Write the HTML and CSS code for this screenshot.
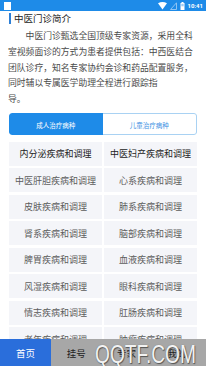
FILE: index.html
```html
<!DOCTYPE html>
<html lang="zh">
<head>
<meta charset="utf-8">
<title>中医门诊简介</title>
<link rel="stylesheet" href="styles.css">
</head>
<body>
<div class="phone">
  <div class="statusbar">
    <span class="notif"></span>
    <span class="sb-right">
      <svg class="ic-wifi" width="9" height="8" viewBox="0 0 9 8"><path d="M0 1.2 Q4.5 -1.2 9 1.2 L4.5 7.5 Z" fill="#fff"/></svg>
      <svg class="ic-sig" width="7" height="8" viewBox="0 0 7 8"><path d="M0.5 7.5 L6.5 7.5 L6.5 0.8 Z" fill="none" stroke="#8fc3f2" stroke-width="1"/></svg>
      <svg class="ic-bat" width="5" height="8" viewBox="0 0 5 8"><rect x="1.5" y="0" width="2" height="1" fill="#fff"/><rect x="0.5" y="1" width="4" height="7" fill="#fff"/><rect x="1.3" y="1.8" width="2.4" height="2.5" fill="#9dcbf3"/></svg>
      <span class="time">10:41</span>
    </span>
  </div>
  <div class="content">
    <div class="title">中医门诊简介</div>
    <p class="intro">中医门诊甄选全国顶级专家资源，采用全科室视频面诊的方式为患者提供包括：中西医结合团队诊疗，知名专家协约会诊和药品配置服务，同时辅以专属医学助理全程进行跟踪指<br>导。</p>
    <div class="tabs">
      <div class="tab active">成人治疗病种</div>
      <div class="tab">儿童治疗病种</div>
    </div>
    <div class="grid">
      <div class="cell strong">内分泌疾病和调理</div>
      <div class="cell strong">中医妇产疾病和调理</div>
      <div class="cell">中医肝胆疾病和调理</div>
      <div class="cell">心系疾病和调理</div>
      <div class="cell">皮肤疾病和调理</div>
      <div class="cell">肺系疾病和调理</div>
      <div class="cell">肾系疾病和调理</div>
      <div class="cell">脑部疾病和调理</div>
      <div class="cell">脾胃疾病和调理</div>
      <div class="cell">血液疾病和调理</div>
      <div class="cell">风湿疾病和调理</div>
      <div class="cell">眼科疾病和调理</div>
      <div class="cell">情志疾病和调理</div>
      <div class="cell">肛肠疾病和调理</div>
      <div class="cell">老年疾病和调理</div>
      <div class="cell">肿瘤疾病和调理</div>
    </div>
  </div>
  <div class="nav">
    <div class="nav-item home">首页</div>
    <div class="nav-rest">
      <div class="nav-item">挂号</div>
      <div class="nav-item">专家</div>
      <div class="nav-item">我的</div>
    </div>
  </div>
  <div class="watermark">QQTF.COM</div>
</div>
</body>
</html>
```

FILE: styles.css
```css
html, body {
  margin: 0;
  padding: 0;
  background: #fff;
}
.phone {
  position: relative;
  width: 206px;
  height: 366px;
  overflow: hidden;
  display: flex;
  flex-direction: column;
  font-family: "Noto Sans CJK SC", "Noto Sans", sans-serif;
}
.statusbar {
  height: 11px;
  flex: none;
  background: #1e8be8;
  display: flex;
  align-items: center;
  justify-content: space-between;
  padding: 0 3px 0 4px;
}
.notif {
  width: 7px;
  height: 8px;
  background: #fff;
}
.sb-right {
  display: flex;
  align-items: center;
  gap: 3px;
}
.time {
  color: #fff;
  font-family: "Roboto", "Liberation Sans", sans-serif;
  font-size: 6px;
  font-weight: 700;
  line-height: 8px;
}
.content {
  flex: 1;
  overflow: hidden;
}
.title {
  margin: 2px 0 0 9px;
  height: 11px;
  border-left: 2px solid #2d7fd6;
  padding-left: 3px;
  font-size: 9.5px;
  line-height: 11px;
  color: #222;
}
.intro {
  margin: 4px 0 0;
  padding: 0 12px 0 8px;
  font-size: 8.8px;
  line-height: 15.8px;
  text-indent: 2em;
  color: #4a4a4a;
}
.tabs {
  margin: 6px 9px 0;
  height: 22px;
  display: flex;
  border-radius: 3px;
  overflow: hidden;
}
.tab {
  flex: 1;
  display: flex;
  align-items: center;
  justify-content: center;
  padding-top: 2px;
  box-sizing: border-box;
  font-size: 6.5px;
  color: #3b8fe2;
  border: 1px solid #a9d2f3;
  border-left: none;
  border-radius: 0 3px 3px 0;
}
.tab.active {
  background: #1e8be8;
  color: #fff;
  border: none;
  border-radius: 3px 0 0 3px;
}
.grid {
  margin-top: 7px;
  padding: 0 9px;
  display: grid;
  grid-template-columns: 1fr 1fr;
  grid-auto-rows: 24px;
  gap: 2.5px 2px;
}
.cell {
  background: #f4f5f9;
  display: flex;
  align-items: center;
  justify-content: center;
  font-size: 9px;
  color: #5c5c5c;
  white-space: nowrap;
}
.cell.strong {
  color: #222;
}
.nav {
  flex: none;
  height: 27px;
  display: flex;
  font-size: 9.5px;
}
.nav-item {
  display: flex;
  align-items: center;
  justify-content: center;
  flex: 1;
  color: #222;
}
.nav-item.home {
  flex: none;
  width: 51px;
  background: #2a6edb;
  color: #fff;
}
.nav-rest {
  flex: 1;
  display: flex;
  background: #a7a7a7;
  padding-right: 4px;
}
.watermark {
  position: absolute;
  left: 95px;
  top: 341px;
  font-family: "Liberation Sans", sans-serif;
  font-size: 25px;
  line-height: 27px;
  color: #f2f2f2;
  text-shadow: 1px 1px 1px #555, 0 0 1px #666;
  transform: scaleX(0.765);
  transform-origin: 0 0;
  white-space: nowrap;
}
```
